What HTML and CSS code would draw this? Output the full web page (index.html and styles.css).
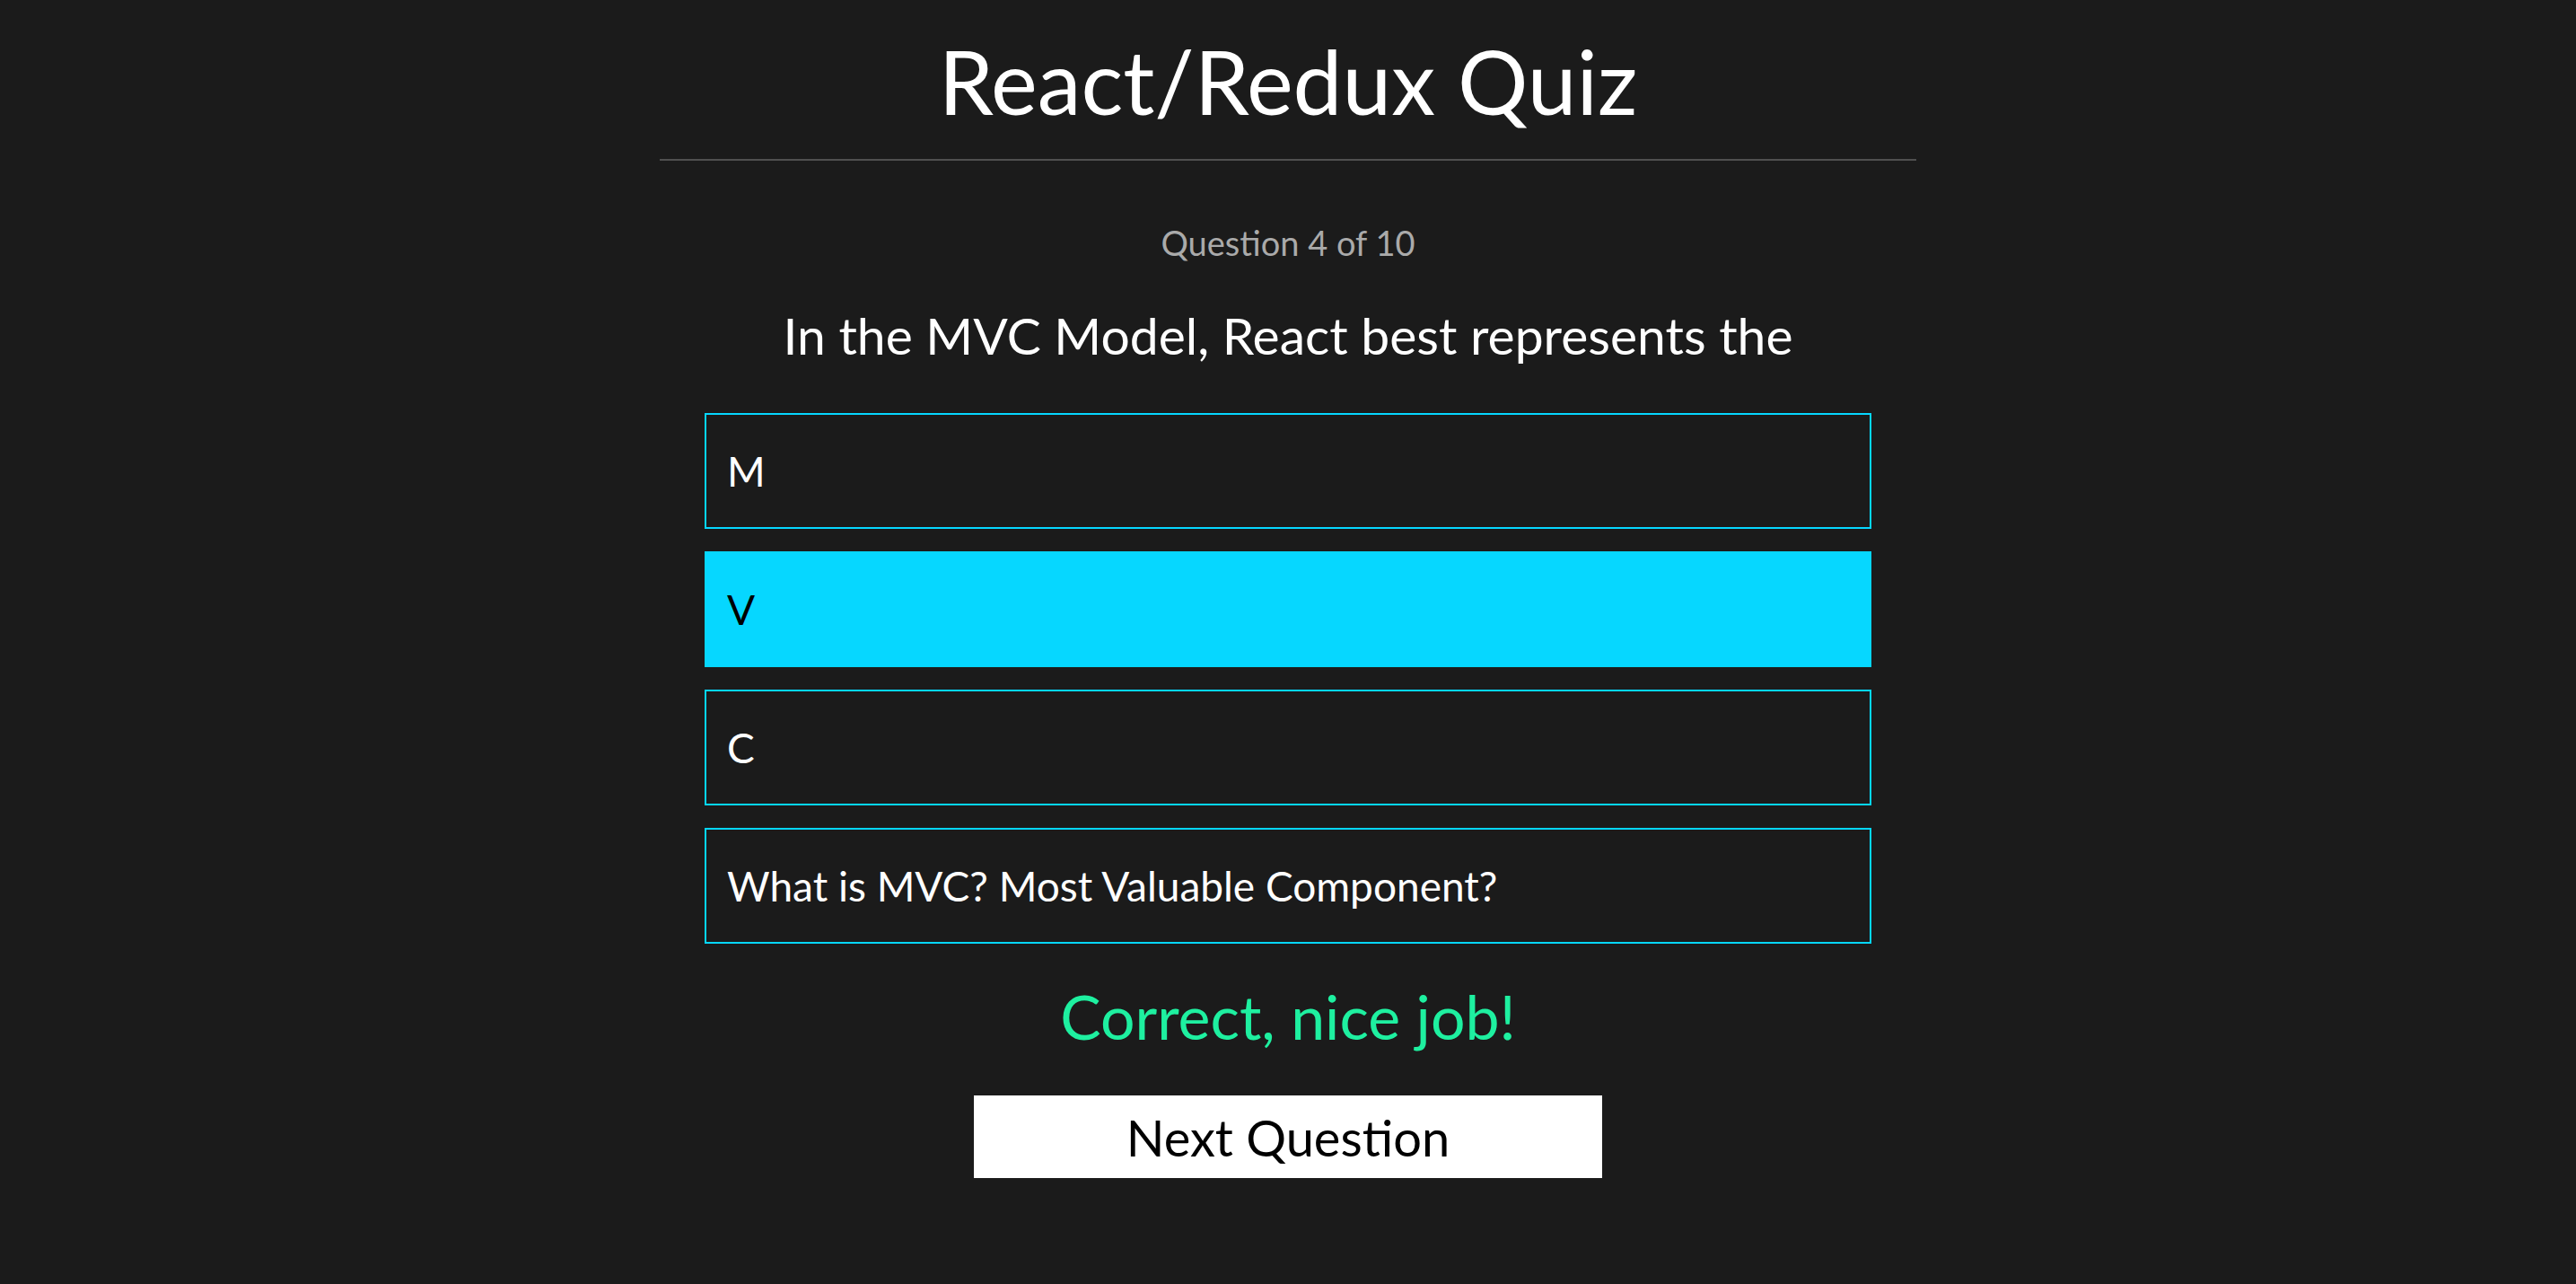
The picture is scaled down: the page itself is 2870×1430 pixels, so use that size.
FILE: index.html
```html
<!DOCTYPE html>
<html>
<head>
<meta charset="utf-8">
<link rel="stylesheet" href="styles.css">
</head>
<body>
<div class="app">
  <h1 class="title">React/Redux Quiz</h1>
  <hr class="rule">
  <div class="counter">Question 4 of 10</div>
  <div class="question">In the MVC Model, React best represents the</div>
  <div class="options">
    <div class="option">M</div>
    <div class="option selected">V</div>
    <div class="option">C</div>
    <div class="option">What is MVC? Most Valuable Component?</div>
  </div>
  <div class="feedback">Correct, nice job!</div>
  <button class="next">Next Question</button>
</div>
</body>
</html>
```
FILE: styles.css
```css
html, body {
  margin: 0;
  padding: 0;
  background: #1b1b1b;
  height: 100%;
}
body {
  font-family: Lato, "Open Sans", sans-serif;
  color: #ffffff;
}
.app {
  width: 1400px;
  margin: 0 auto;
  display: flex;
  flex-direction: column;
  align-items: center;
}
.title {
  margin: 30px 0 0 0;
  font-size: 98px;
  font-weight: 400;
  line-height: 120px;
}
.rule {
  width: 1400px;
  border: none;
  border-top: 2px solid #505050;
  margin: 27px 0 0 0;
}
.counter {
  margin-top: 66px;
  font-size: 38px;
  line-height: 50px;
  color: #aaaaaa;
}
.question {
  margin-top: 43px;
  font-size: 57px;
  line-height: 70px;
}
.options {
  margin-top: 52px;
  width: 1300px;
  display: flex;
  flex-direction: column;
  gap: 25px;
}
.option {
  box-sizing: border-box;
  height: 129px;
  border: 2px solid #06d7ff;
  padding: 0 23px;
  display: flex;
  align-items: center;
  font-size: 46px;
}
.option.selected {
  background: #06d7ff;
  color: #000000;
}
.feedback {
  margin-top: 36px;
  font-size: 68px;
  line-height: 90px;
  color: #1ef0a0;
}
.next {
  margin-top: 43px;
  width: 700px;
  height: 92px;
  border: none;
  background: #ffffff;
  color: #000000;
  font-family: Lato, "Open Sans", sans-serif;
  font-size: 56px;
  padding: 0;
}
```
